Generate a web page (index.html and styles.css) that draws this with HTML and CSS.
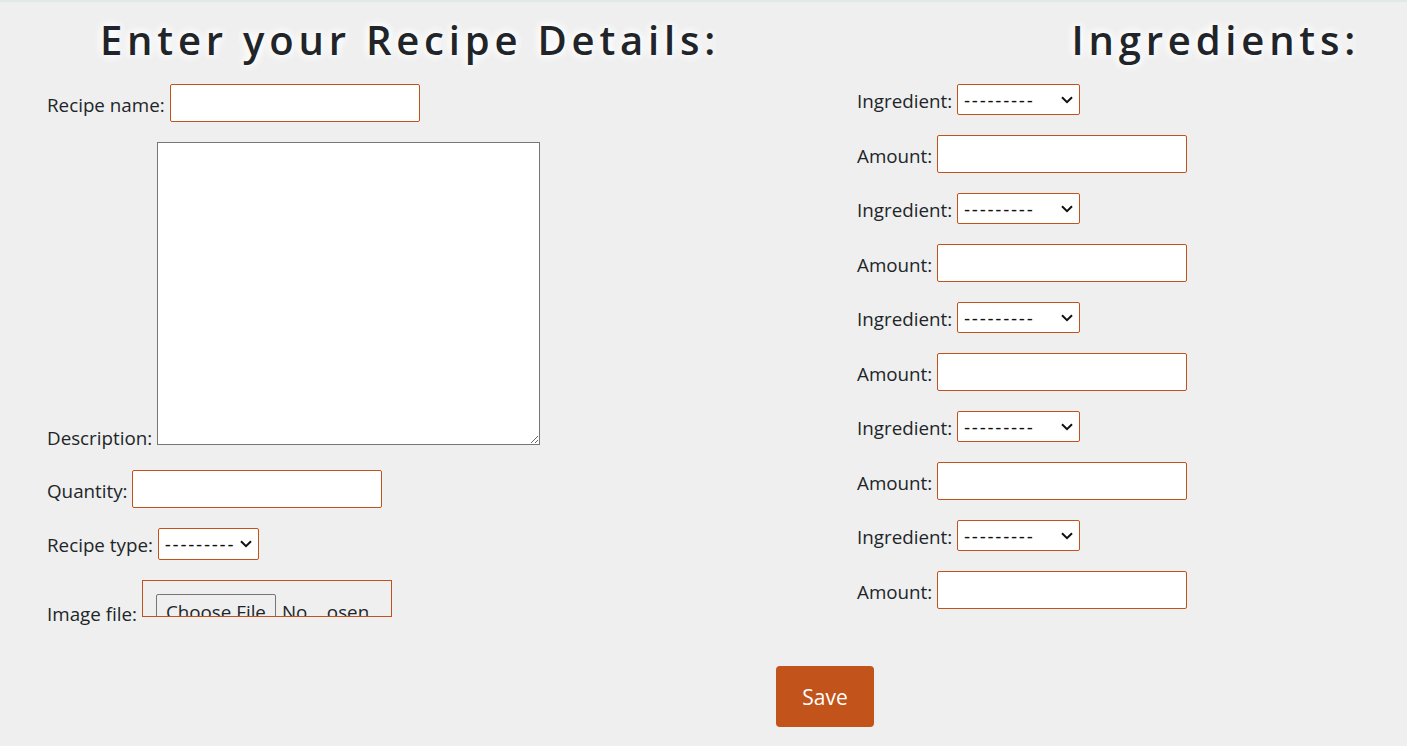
FILE: index.html
```html
<!DOCTYPE html>
<html lang="en">
<head>
<meta charset="utf-8">
<title>Recipe</title>
<link rel="stylesheet" href="styles.css">
</head>
<body>
<form class="recipe-form">
  <div class="columns">
    <section class="col col-left">
      <h2 class="title title-left">Enter your Recipe Details:</h2>
      <p class="field"><label class="lbl">Recipe name:</label> <input type="text" class="text-input"></p>
      <p class="field"><label class="lbl lbl-desc">Description:</label> <textarea class="desc"></textarea></p>
      <p class="field"><label class="lbl">Quantity:</label> <input type="text" class="text-input"></p>
      <p class="field"><label class="lbl">Recipe type:</label> <select class="sel sel-type"><option>---------</option></select></p>
      <p class="field"><label class="lbl">Image file:</label> <input type="file" class="file-input"></p>
    </section>
    <section class="col col-right">
      <h2 class="title title-right">Ingredients:</h2>
      <p class="field"><label class="lbl">Ingredient:</label> <select class="sel sel-ing"><option>---------</option></select></p>
      <p class="field"><label class="lbl">Amount:</label> <input type="text" class="text-input"></p>
      <p class="field"><label class="lbl">Ingredient:</label> <select class="sel sel-ing"><option>---------</option></select></p>
      <p class="field"><label class="lbl">Amount:</label> <input type="text" class="text-input"></p>
      <p class="field"><label class="lbl">Ingredient:</label> <select class="sel sel-ing"><option>---------</option></select></p>
      <p class="field"><label class="lbl">Amount:</label> <input type="text" class="text-input"></p>
      <p class="field"><label class="lbl">Ingredient:</label> <select class="sel sel-ing"><option>---------</option></select></p>
      <p class="field"><label class="lbl">Amount:</label> <input type="text" class="text-input"></p>
      <p class="field"><label class="lbl">Ingredient:</label> <select class="sel sel-ing"><option>---------</option></select></p>
      <p class="field"><label class="lbl">Amount:</label> <input type="text" class="text-input"></p>
    </section>
  </div>
  <div class="actions">
    <button type="button" class="save">Save</button>
  </div>
</form>
</body>
</html>
```
FILE: styles.css
```css
html, body {
  margin: 0;
  padding: 0;
}
body {
  background: #efefef;
  border-top: 2px solid #e1e8e5;
  font-family: "Open Sans", "Noto Sans", sans-serif;
  font-size: 18.8px;
  color: #212529;
  height: 744px;
  overflow: hidden;
}
.columns {
  display: grid;
  grid-template-columns: 810px 1fr;
}
.col {
  padding: 0 47px;
}
.title {
  margin: 14px 0 20px;
  font-size: 40px;
  line-height: 48px;
  font-weight: 600;
  letter-spacing: 4.8px;
  text-align: center;
  text-shadow: 0 0 12px #fff, 0 0 12px #fff, 0 0 8px #fff;
}
.title-left {
  padding-left: 10px;
}
.title-right {
  text-align: right;
}
.field {
  margin: 0 0 20px;
  line-height: 24px;
}
.lbl {
  vertical-align: -2px;
}
.lbl-desc {
  vertical-align: baseline;
}
.text-input {
  box-sizing: border-box;
  width: 250px;
  height: 38px;
  border: 1px solid #c2521b;
  border-radius: 2px;
  background: #fff;
  font: inherit;
  padding: 0 6px;
  vertical-align: baseline;
}
.desc {
  box-sizing: border-box;
  width: 383px;
  height: 303px;
  border: 1px solid #767676;
  background: #fff;
  margin: 0;
  font: inherit;
  vertical-align: baseline;
}
.sel {
  box-sizing: border-box;
  -webkit-appearance: none;
  appearance: none;
  border: 1px solid #c2521b;
  border-radius: 2px;
  background-color: #fff;
  background-image: url("data:image/svg+xml,%3Csvg xmlns='http://www.w3.org/2000/svg' width='12' height='8' viewBox='0 0 12 8'%3E%3Cpath d='M1 1.2 6 6.2 11 1.2' fill='none' stroke='%23111' stroke-width='2'/%3E%3C/svg%3E");
  background-repeat: no-repeat;
  background-size: 12px 8px;
  background-position: right 6px center;
  color: #111;
  font-family: "DejaVu Sans", sans-serif;
  font-size: 17px;
  letter-spacing: 1.7px;
  padding: 0 0 0 6px;
}
.sel-ing {
  width: 123px;
  height: 31px;
}
.sel-type {
  width: 101px;
  height: 32px;
}
.file-input {
  box-sizing: border-box;
  width: 250px;
  height: 37px;
  border: 1px solid #c2521b;
  padding: 13px;
  font: inherit;
  overflow: hidden;
}
.file-input::file-selector-button {
  font: inherit;
  color: #212529;
  padding: 5px 9px 1px;
  margin-right: 6px;
  border: 1px solid #767676;
  border-radius: 2px;
  background: #efefef;
}
.actions {
  padding: 20px 0 0 776px;
}
.save {
  width: 98px;
  height: 61px;
  border: none;
  border-radius: 4px;
  background: #c1531b;
  color: #fff;
  font-family: "Open Sans", sans-serif;
  font-size: 21px;
}
```
